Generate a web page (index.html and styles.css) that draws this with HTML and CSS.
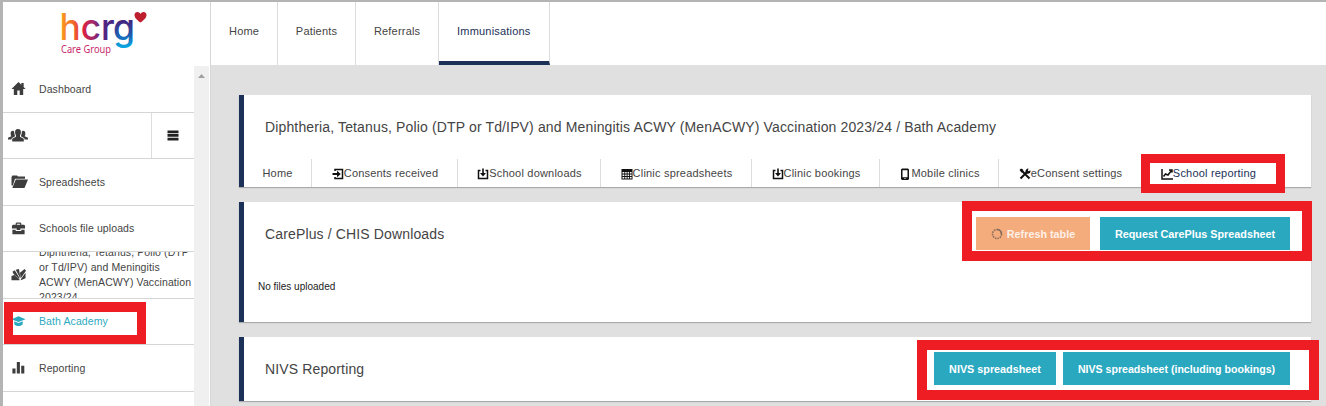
FILE: index.html
```html
<!DOCTYPE html>
<html lang="en">
<head>
    <meta charset="UTF-8">
    <meta name="viewport" content="width=device-width, initial-scale=1.0">
    <title>School reporting</title>
    <link rel="stylesheet" href="styles.css">
</head>
<body>
    <div class="app">
        <aside class="sidebar">
            <div class="logo">
                <svg width="90" height="50" viewBox="0 0 90 50">
                    <defs>
                        <linearGradient id="brand" x1="0" y1="0" x2="1" y2="0">
                            <stop offset="0" stop-color="#f9a11b"/>
                            <stop offset="0.25" stop-color="#f26a2e"/>
                            <stop offset="0.42" stop-color="#e0213f"/>
                            <stop offset="0.62" stop-color="#a02a6c"/>
                            <stop offset="0.75" stop-color="#5a2483"/>
                            <stop offset="1" stop-color="#43267f"/>
                        </linearGradient>
                        <linearGradient id="tail" x1="0" y1="0" x2="0" y2="1">
                            <stop offset="0.4" stop-color="#43267f"/>
                            <stop offset="0.7" stop-color="#1d5cb0"/>
                            <stop offset="0.95" stop-color="#0aa5e0"/>
                        </linearGradient>
                    </defs>
                    <text class="logo-name" x="-1.500" y="29.500" textLength="55" lengthAdjust="spacingAndGlyphs" fill="url(#brand)">hcr</text>
                    <text class="logo-name" x="52" y="29.500" textLength="22" lengthAdjust="spacingAndGlyphs" fill="url(#tail)">g</text>
                    <text class="logo-group" x="0" y="42.500" textLength="50" lengthAdjust="spacingAndGlyphs">Care Group</text>
                    <path fill="#be1e2d" d="M79.500 12.500C75 9.500 73.500 7 73.500 5C73.500 1 78.500 1.300 79.500 4C80.500 1.300 85.500 1 85.500 5C85.500 7 84 9.500 79.500 12.500z"/>
                </svg>
            </div>
            <div class="side-body">
                <nav class="side-nav">
                    <a class="side-item">
                        <svg class="side-icon" viewBox="0 0 16 16"><path d="M8 1L0.500 8.500H3V15H6.700V10H9.300V15H13V8.500H15.500L13.500 6.500V2H11V4z"/></svg>
                        <span>Dashboard</span>
                    </a>
                    <div class="side-item side-split">
                        <svg class="side-icon people" viewBox="0 0 20 14"><path d="M10 0.500C12.400 0.500 13 2 12.900 4C12.800 5.500 12.400 6 12 7V8.200L15.800 10.300V13H4.200V10.300L8 8.200V7C7.600 6 7.200 5.500 7.100 4C7 2 7.600 0.500 10 0.500zM4.800 2.200C5.700 2.200 6.200 2.500 6.300 4.500C6.400 6 7.100 7 7.100 7.800L3.600 9.800V11H0V9.300L3.400 7.700C2.600 6.500 2.600 5.800 2.700 4.500C2.800 3 3.600 2.200 4.800 2.200zM15.200 2.200C14.300 2.200 13.800 2.500 13.700 4.500C13.600 6 12.900 7 12.900 7.800L16.400 9.800V11H20V9.300L16.600 7.700C17.400 6.500 17.400 5.800 17.300 4.500C17.200 3 16.400 2.200 15.200 2.200z"/></svg>
                        <span class="side-menu"><svg width="12" height="11" viewBox="0 0 12 11"><path d="M0.500 0.500h11v2.700h-11zM0.500 4.100h11v2.700h-11zM0.500 7.800h11v2.700h-11z"/></svg></span>
                    </div>
                    <a class="side-item">
                        <svg class="side-icon folder" viewBox="0 0 17 14"><path d="M0.500 11V2.500L1.500 1H6L7 2H14V4.200H4L1.800 11zM4.800 5H17L13.500 13.500H1.300z"/></svg>
                        <span>Spreadsheets</span>
                    </a>
                    <a class="side-item">
                        <svg class="side-icon" viewBox="0 0 16 16"><path d="M5 4V2.500L6 1.500H10L11 2.500V4H14L15 5V8H10V9.500H6V8H1V5L2 4zM6.200 4H9.800V2.800H6.200zM1.500 9.200H5V10.700H11V9.200H14.500V14H1.500z" fill-rule="evenodd"/></svg>
                        <span>Schools file uploads</span>
                    </a>
                    <a class="side-item">
                        <svg class="side-icon" viewBox="0 0 16 16"><path d="M0.500 9.500L3.500 8.500L9 13V14H0.500zM1.500 5L4 3.500L9.300 12L8.500 12.200L3 7.800zM5 2.800L8.500 2L10 11.500L9.300 11zM9.500 6L14.500 2L16 4L10.800 11.500H10.300zM15.500 6V12L10.500 14V13z"/></svg>
                        <span>Diphtheria, Tetanus, Polio (DTP or Td/IPV) and Meningitis ACWY (MenACWY) Vaccination 2023/24</span>
                    </a>
                    <a class="side-item active">
                        <svg class="side-icon" viewBox="0 0 16 16"><path d="M0.500 5.500L8 2.500L15.500 5.500L8 8.500zM3.500 7.800L8 9.700L12.500 7.800V11C11 13.500 5 13.500 3.500 11z"/></svg>
                        <span>Bath Academy</span>
                    </a>
                    <a class="side-item">
                        <svg class="side-icon" viewBox="0 0 16 16"><path d="M1.500 9h3.300v5.500h-3.300zM6.200 2h3.300v12.500h-3.300zM10.900 6h3.300v8.500h-3.300z"/></svg>
                        <span>Reporting</span>
                    </a>
                </nav>
                <div class="scrollbar"><svg width="7" height="4" viewBox="0 0 7 4"><path d="M3.500 0L7 4H0z"/></svg></div>
            </div>
        </aside>

        <div class="main">
            <nav class="top-nav">
                <a class="top-tab">Home</a>
                <a class="top-tab">Patients</a>
                <a class="top-tab">Referrals</a>
                <a class="top-tab current">Immunisations</a>
            </nav>
            <main class="content">
                <section class="card card-session">
                    <h1>Diphtheria, Tetanus, Polio (DTP or Td/IPV) and Meningitis ACWY (MenACWY) Vaccination 2023/24 / Bath Academy</h1>
                    <nav class="tabs">
                        <a>Home</a>
                        <a><svg class="tab-icon" viewBox="0 0 12 12"><path class="line" d="M3 3V1.500H10.500V10.500H3V9"/><path d="M0.500 5H5V2.800L8.800 6L5 9.200V7H0.500z"/></svg>Consents received</a>
                        <a><svg class="tab-icon" viewBox="0 0 12 12"><path class="line" d="M3.500 2.500H1.500V10.500H10.500V2.500H8.500"/><path d="M5.200 0.500H6.800V5H9L6 8.500L3 5H5.200z"/></svg>School downloads</a>
                        <a><svg class="tab-icon" viewBox="0 0 12 12"><path fill-rule="evenodd" d="M0.500 1H11.500V11.500H0.500zM1.500 4V5.500H3.300V4zM4.200 4V5.500H5.700V4zM6.600 4V5.500H8.100V4zM9 4V5.500H10.600V4zM1.500 6.500V8H3.300V6.500zM4.200 6.500V8H5.700V6.500zM6.600 6.500V8H8.100V6.500zM9 6.500V8H10.600V6.500zM1.500 9V10.600H3.300V9zM4.200 9V10.600H5.700V9zM6.600 9V10.600H8.100V9zM9 9V10.600H10.600V9z"/></svg>Clinic spreadsheets</a>
                        <a><svg class="tab-icon" viewBox="0 0 12 12"><path class="line" d="M3.500 2.500H1.500V10.500H10.500V2.500H8.500"/><path d="M5.200 0.500H6.800V5H9L6 8.500L3 5H5.200z"/></svg>Clinic bookings</a>
                        <a><svg class="tab-icon" viewBox="0 0 12 12"><path fill-rule="evenodd" d="M3 0.500H9L10 1.500V11L9 12H3L2 11V1.500zM3.500 2.200V9.300H8.500V2.200zM5.300 10.200V11H6.700V10.200z"/></svg>Mobile clinics</a>
                        <a><svg class="tab-icon" viewBox="0 0 12 12"><path class="line thick" d="M2 2L10.500 10.500M1.500 10.500L8 4"/><path d="M0.500 2L2 0.500L4 1.500L4.500 4L2.500 4.500zM9.500 0.500L8.800 3.200L11.500 2.500C12 5 9.500 6.500 7 5.500L6.500 5C6 2 7.500 0.500 9.500 0.500z"/></svg>eConsent settings</a>
                        <a class="selected"><svg class="tab-icon" viewBox="0 0 12 12"><path class="line" d="M1 1V11H12M2.500 8.500L4.500 6L7 7L10.500 2.500M8 2H11V4.500"/></svg>School reporting</a>
                    </nav>
                    <div class="highlight highlight-tab"></div>
                </section>

                <section class="card card-careplus">
                    <header>
                        <h2>CarePlus / CHIS Downloads</h2>
                        <button class="btn btn-refresh"><svg width="12" height="12" viewBox="0 0 12 12"><circle cx="6" cy="6" r="4.500"/><path d="M6 1.500A4.500 4.500 0 0 1 10.500 6"/></svg>Refresh table</button>
                        <button class="btn btn-request">Request CarePlus Spreadsheet</button>
                    </header>
                    <p>No files uploaded</p>
                    <div class="highlight highlight-careplus"></div>
                </section>

                <section class="card card-nivs">
                    <header>
                        <h2>NIVS Reporting</h2>
                        <button class="btn btn-nivs">NIVS spreadsheet</button>
                        <button class="btn btn-bookings">NIVS spreadsheet (including bookings)</button>
                    </header>
                    <div class="highlight highlight-nivs"></div>
                </section>
            </main>
        </div>
        <div class="highlight highlight-school"></div>
    </div>
</body>
</html>
```
FILE: styles.css
```css
* {
    box-sizing: border-box;
}

body {
    margin: 0;
    font-family: "Liberation Sans", Arial, sans-serif;
    color: #444;
    overflow: hidden;
}

.app {
    position: relative;
    display: flex;
    height: 406px;
    border-top: 2px solid #b4b4b4;
    border-left: 3px solid #b4b4b4;
    background: #e0e0e0;
}

/* Sidebar */
.sidebar {
    width: 208px;
    flex: none;
    display: flex;
    flex-direction: column;
    background: #fff;
    border-right: 1px solid #d8d8d8;
}

.logo {
    height: 64px;
    flex: none;
    padding: 8px 0 0 58px;
}

.logo svg {
    display: block;
    overflow: visible;
}

.logo-name {
    font-family: Inter, sans-serif;
    font-size: 37px;
    font-weight: 500;
}

.logo-group {
    font-family: "Noto Sans", sans-serif;
    font-size: 11.5px;
    fill: #c8286a;
}

.side-body {
    display: flex;
    flex: 1;
    min-height: 0;
}

.side-nav {
    width: 191px;
    overflow: hidden;
}

.side-item {
    display: flex;
    align-items: center;
    height: 46.5px;
    overflow: hidden;
    border-bottom: 1px solid #d5d5d5;
    font-size: 10.5px;
    line-height: 15px;
    letter-spacing: 0.1px;
}

.side-icon {
    width: 15px;
    height: 15px;
    flex: none;
    margin: 0 13px 0 8px;
    fill: #3d3d3d;
}

.side-icon.people {
    width: 20px;
    margin-left: 5px;
}

.side-icon.folder {
    width: 17px;
    margin-right: 11px;
}

.side-item span {
    flex: none;
    width: 154px;
    padding-top: 1px;
}

.side-item .side-menu {
    width: 43px;
    height: 100%;
    padding: 0;
    margin-left: auto;
    display: flex;
    align-items: center;
    justify-content: center;
    border-left: 1px solid #dcdcdc;
    fill: #222;
}

.active {
    color: #2ba9c1;
}

.active .side-icon {
    fill: #2ba9c1;
}

.scrollbar {
    width: 15px;
    padding-top: 7px;
    background: #f0f0f0;
    text-align: center;
    line-height: 0;
    fill: #a0a0a0;
}

/* Top navigation */
.main {
    flex: 1;
}

.top-nav {
    display: flex;
    height: 63px;
    background: #fff;
}

.top-tab {
    padding: 21px 17.7px 0 18px;
    border-right: 1px solid #dcdcdc;
    font-size: 11px;
    line-height: 16px;
    letter-spacing: 0.2px;
}

.current {
    padding-right: 18.5px;
    color: #1b3158;
    border-bottom: 4px solid #1b3158;
}

/* Cards */
.content {
    padding: 30px 15px 0 28px;
}

.card {
    position: relative;
    margin-bottom: 15px;
    background: #fff;
    border-left: 5px solid #1b3158;
    box-shadow: 0 1px 1px #aaa;
}

.card-session {
    height: 92px;
}

.card-careplus {
    height: 120px;
}

.card-nivs {
    height: 64px;
}

h1, h2 {
    margin: 0;
    padding-left: 21px;
    font-size: 14px;
    font-weight: 400;
    line-height: 64px;
    letter-spacing: 0.14px;
    white-space: nowrap;
}

h2 {
    flex: 1;
}

.tabs {
    display: grid;
    grid-template-columns: 68px 146px 143px 151px 128px 119px 143px 144px;
    height: 28px;
}

.tabs a {
    display: flex;
    align-items: center;
    justify-content: center;
    border-right: 1px solid #dcdcdc;
    font-size: 11px;
    letter-spacing: 0.2px;
    white-space: nowrap;
}

.tabs a:not(:first-child) {
    padding-left: 1px;
}

.tabs a:last-child {
    border-right: 0;
}

.tabs .selected {
    padding-right: 12px;
    color: #1b3158;
}

.tab-icon {
    width: 12px;
    height: 12px;
    margin-top: 1px;
    fill: #111;
}

.line {
    fill: none;
    stroke: #111;
    stroke-width: 1.5;
}

.thick {
    stroke-width: 2;
}

.card header {
    display: flex;
    align-items: center;
    height: 63px;
    padding-right: 21px;
}

.card p {
    margin: 0;
    padding: 14px;
    font-size: 10px;
    line-height: 16px;
    color: #222;
}

.btn {
    height: 33px;
    padding: 0;
    border: 0;
    background: #29a8c0;
    color: #fff;
    font: bold 10.8px "Liberation Sans", Arial, sans-serif;
    white-space: nowrap;
}

.btn-refresh {
    width: 114px;
    margin-right: 10px;
    display: flex;
    align-items: center;
    justify-content: center;
    gap: 4px;
    background: #f5ac7c;
    color: #fdf0e8;
}

.btn-refresh svg {
    fill: none;
    stroke: #806a5c;
    stroke-width: 1.5;
}

.btn-refresh circle {
    stroke-dasharray: 1.5 1;
}

.btn-request {
    width: 190px;
}

.btn-nivs {
    width: 122px;
    margin-right: 7px;
}

.btn-bookings {
    width: 227px;
    font-size: 10.6px;
}

/* Red marker boxes laid over the page */
.highlight {
    position: absolute;
    border: 10px solid #ee1c23;
    pointer-events: none;
}

.highlight-school {
    left: 1px;
    top: 300px;
    width: 142px;
    height: 42px;
    border-width: 10px 9px 9px 9px;
}

.highlight-tab {
    left: 897px;
    top: 59px;
    width: 144px;
    height: 39px;
    border-width: 9px;
    z-index: 1;
}

.highlight-careplus {
    left: 718px;
    top: -1px;
    width: 350px;
    height: 60px;
}

.highlight-nivs {
    left: 673px;
    top: 3px;
    width: 402px;
    height: 60px;
}
```
